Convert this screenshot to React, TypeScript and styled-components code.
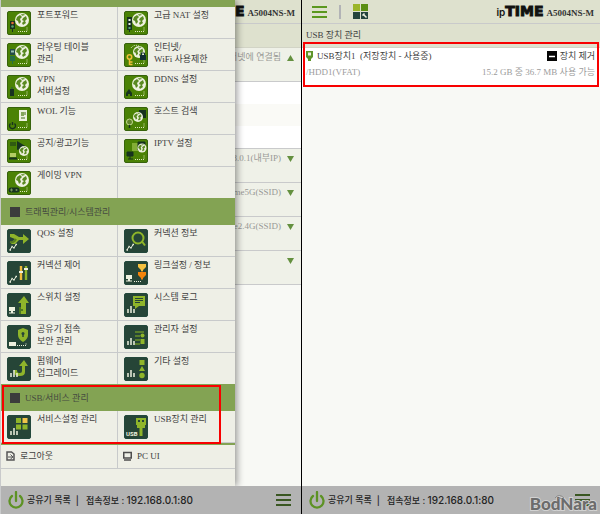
import React from "react";
import styled, { createGlobalStyle } from "styled-components";

const GlobalStyle = createGlobalStyle`
  * { box-sizing: border-box; }
  body {
    margin: 0;
    background: #f8f9f5;
    color: #404040;
    font-family: "Liberation Serif", "Noto Sans CJK KR", serif;
    font-size: 9px;
    line-height: 12px;
  }
  a { color: inherit; text-decoration: none; }
  button { font: inherit; color: inherit; background: none; border: 0; padding: 0; cursor: pointer; }
  svg { display: block; flex: none; }
  h1, h2, p { margin: 0; font: inherit; }
`;

const Screens = styled.div`
  display: grid;
  grid-template-columns: 301fr 299fr;
  min-height: 100vh;
`;

const Phone = styled.section<{ $edge: string }>`
  display: flex;
  flex-direction: column;
  min-width: 0;
  border-left: 1px solid ${(p) => p.$edge};
`;

const Body = styled.main`
  position: relative;
  flex: 1;
`;

const Header = styled.header`
  display: flex;
  align-items: center;
  height: 24px;
  padding: 0 6px 0 10px;
  background: #dee1ce;
  border-bottom: 1px solid #c9cacb;
`;

const HeaderTools = styled.div`
  display: flex;
  align-items: center;
  gap: 12px;
`;

const ToolDivider = styled.span`
  width: 2px;
  height: 14px;
  background: #b2b3b6;
`;

const Brand = styled.div`
  display: flex;
  align-items: baseline;
  margin-left: auto;
  color: #111;
`;

const BrandIp = styled.span`
  font: 600 10px/14px Inter, sans-serif;
`;

const BrandTime = styled.span`
  font: 700 14px/14px "DejaVu Sans", sans-serif;
  -webkit-text-stroke: 1px #111;
`;

const Model = styled.span`
  margin-left: 3px;
  color: #343434;
  font-weight: 700;
`;

const TitleBar = styled.h1`
  height: 24px;
  padding: 5px 4px;
  background: #dee1ce;
  border-bottom: 1px solid #d2d4c6;
`;

const StatusRow = styled.button`
  display: flex;
  justify-content: flex-end;
  align-items: flex-start;
  gap: 6px;
  width: 100%;
  height: 34px;
  padding: 3px 7px;
  border-bottom: 1px solid #c9cacb;
  background: #eff1e8;
  color: #999996;
`;

const Stripe = styled.div<{ $tone: string }>`
  height: 22px;
  background: ${(p) => p.$tone};
`;

const StripeGroup = styled.div`
  border-bottom: 1px solid #c9cacb;
`;

const Arrow = styled.svg`
  margin-top: 4px;
`;

const Drawer = styled.nav`
  position: absolute;
  inset: 0 auto 0 0;
  width: 78%;
  background: #eeefe6;
  border-top: 7px solid #83a353;
  box-shadow: 2px 0 7px rgba(0, 0, 0, 0.4);
  clip-path: inset(0 -12px 0 0);
`;

const MenuGroup = styled.div`
  position: relative;
`;

const SectionTitle = styled.h2`
  position: relative;
  display: flex;
  align-items: center;
  gap: 5px;
  height: 27px;
  margin-top: -1px;
  padding: 0 9px;
  background: #83a353;
  color: #464b40;

  &::before {
    content: "";
    width: 10px;
    height: 10px;
    background: #3c3c3c;
  }
`;

const MenuGrid = styled.div`
  display: grid;
  grid-template-columns: 1fr 1fr;
`;

const MenuLink = styled.a`
  display: flex;
  align-items: flex-start;
  gap: 6px;
  min-height: 32px;
  padding: 4px 0 0 6px;
  border-bottom: 1px solid #c8cacb;
  white-space: pre-line;

  &:nth-child(odd) { border-right: 1px solid #c8cacb; }
`;

const MenuLabel = styled.span`
  margin-top: -2px;
`;

const ShortLinks = styled(MenuGrid)`
  border-top: 2px solid #83a353;
`;

const ShortLink = styled.a`
  display: flex;
  align-items: center;
  gap: 5px;
  height: 24px;
  padding: 0 5px 2px;
  border-bottom: 1px solid #c8cacb;

  &:first-child { border-right: 1px solid #c8cacb; }
`;

const MenuMark = styled.div`
  position: absolute;
  inset: 1px 14px -1px 1px;
  border: 2px solid #f80000;
  pointer-events: none;
`;

const Device = styled.article`
  position: relative;
  padding: 0 5px 0 4px;
  height: 39px;
  background: #fff;
`;

const DeviceMark = styled.div`
  position: absolute;
  inset: -6px 1px 0 1px;
  border: 2px solid #f80000;
  pointer-events: none;
`;

const DeviceLine = styled.div<{ $muted?: boolean }>`
  display: flex;
  justify-content: space-between;
  align-items: center;
  height: 16px;
  color: ${(p) => (p.$muted ? "#9c9c9c" : "#404040")};
`;

const DeviceName = styled.p`
  display: flex;
  align-items: center;
  gap: 4px;
  white-space: pre;
`;

const RemoveButton = styled.button`
  display: flex;
  align-items: center;
  gap: 3px;
`;

const Footer = styled.footer`
  position: relative;
  display: flex;
  align-items: center;
  height: 28px;
  padding: 0 10px 0 7px;
  background: #b3b3b3;
  color: #242424;
  font-family: Inter, "Noto Sans CJK KR", sans-serif;
  font-weight: 500;
`;

const FooterButton = styled.button`
  display: flex;
  align-items: center;
  gap: 3px;
`;

const FooterInfo = styled.p`
  display: flex;
  align-items: baseline;
  gap: 7px;
  margin-left: 5px;
`;

const Address = styled.span`
  font-size: 10px;
`;

const FooterMenu = styled.button`
  margin-left: auto;
`;

const Watermark = styled.div`
  position: absolute;
  right: 3px;
  bottom: 1px;
  color: #6c6c6c;
  font: 900 17px/18px Lato, sans-serif;
  -webkit-text-stroke: 2px #d2d2d2;
  paint-order: stroke fill;
`;

const WatermarkWave = styled.svg`
  position: absolute;
  left: 24px;
  top: -1px;
`;

const LIME = "#8fb52a";
const CREAM = "#eef1df";
const INK = "#17321f";

function Globe({ x = 15, y = 9, r = 7 }: { x?: number; y?: number; r?: number }) {
  return (
    <g transform={`translate(${x} ${y}) scale(${r / 7})`}>
      <circle r="7" fill={CREAM} />
      <path d="M-5-3 -2-5 0-3-2-1-1 2-3 4-4 1-6 0Z" fill="#5a8a22" />
      <path d="M1-2 4-4 5-1 3 1 4 3 1 5 0 3 2 1 0 0Z" fill="#5a8a22" />
      <path d="M-1-6 2-6 3-5 0-4Z" fill="#7aa34c" />
    </g>
  );
}

function Bars() {
  return <path d="M4 20v-4M7 20v-7M10 20v-4" stroke={CREAM} strokeWidth="1.5" />;
}

function Trend() {
  return (
    <g fill="none" stroke={CREAM}>
      <path d="M3 21 5 17.500 7 19 9 15.500" />
      <path d="M2.500 21h1.500M4.500 17.500h1M6.500 19h1M8.500 15.500h1.500" strokeWidth="1.500" />
    </g>
  );
}

function Host() {
  return <path d="M2 14h6v4H6v1.500h2v1H2v-1h2V18H2Z" fill={CREAM} />;
}

const Lights = ({ top }: { top: string }) => (
  <g>
    <path d="M3 10h5v8H6v3H5v-3H3Z" fill={INK} />
    <circle cx="5.5" cy="12" r="1.300" fill={top} />
    <circle cx="5.5" cy="15.500" r="1.300" fill="#56a36e" />
  </g>
);

const netArt: Record<string, React.ReactNode> = {
  forward: <><Globe /><Lights top="#e76b35" /></>,
  nat: <><Globe /><path d="M3 6h5v13H6v2H5v-2H3Z" fill={INK} /><path d="M4.500 8h2v2h-2zM4.500 12h2v2h-2z" fill="#e8efe6" /><path d="M4.500 16h2v2h-2z" fill="#57a378" /></>,
  route: <><Globe /><path d="M3 6h5v6H3z" fill="#244d46" /><path d="M4 7.500h3v2H4z" fill="#9bc0b2" /><path d="M3 13h5v5H6v3H5v-3H3Z" fill="#276e45" /></>,
  limit: <><Globe r={6} /><path d="M7 5q3-4 8-2" fill="none" stroke={CREAM} strokeDasharray="1 1" /><path d="M16 12h6v5h-6z" fill="#122d32" /><path d="M17.500 12v-2h3v2" fill="none" stroke="#122d32" /><circle cx="5.500" cy="14" r="2.200" fill="none" stroke="#efbf38" strokeWidth="1.600" /><path d="M5.500 16v6M5.500 19h3M5.500 21.500h3" stroke="#efbf38" strokeWidth="1.500" /></>,
  vpn: <><Globe /><path d="M3 14h4v7H3z" fill={INK} /><path d="M4 12h2v2H4z" fill="#386c27" /></>,
  ddns: <><Globe /><path d="M2 18 5 14 8 18V21H6V19H4V21H2Z" fill={INK} /></>,
  wol: <><path d="M12 3h8v11h-8z" fill={CREAM} /><path d="M14 5h3v4h-3z" fill="#86a65b" /><path d="M14 11h4M18 5v3" stroke="#456c1b" /><path d="M3.500 16.500a3 3 0 1 0 4 0M5.500 15v3" fill="none" stroke={INK} strokeWidth="1.400" /></>,
  search: <><path d="M15 3h7v8h-7z" fill={INK} /><Globe x={14} y={10} r={5} /><circle cx="5.500" cy="15" r="3" fill="#61852b" stroke="#c5d992" /><path d="M5.500 18v3" stroke={INK} strokeWidth="1.500" /></>,
  notice: <><path d="M10 2 20 8 10 11Z" fill={INK} /><path d="M3 4h6M3 6h6" stroke={INK} /><Globe x={17} y={12} r={5} /><path d="M3 14h6v4H3z" fill="#b3ce64" /><path d="M2 19.500h8" stroke={INK} strokeWidth="2" /></>,
  iptv: <><path d="M8 4h6v8H8z" fill="#83ae36" /><path d="M14 3h7v8h-7zM3 13h6v4H3zM4 20h5M6 17v3" fill={INK} stroke={INK} /><Globe x={18} y={9} r={4.5} /></>,
  gaming: <><Globe /><rect x="1.500" y="16.500" width="11" height="5" rx="2.500" fill={INK} /><path d="M3 19h3M4.500 17.500v3" stroke="#739657" /><circle cx="9.500" cy="19" r="1" fill="#739657" /></>,
};

const Node = ({ x, y, fill }: { x: number; y: number; fill: string }) => (
  <path transform={`translate(${x} ${y})`} d="M-4-3h8v3L1 3v1h-2V3l-3-3Z" fill={fill} />
);

const sysArt: Record<string, React.ReactNode> = {
  qos: <><path d="M3 5h4l5 3h4V5l6 5-6 5v-4h-4l-4 4H4l1-2 3-3-5-2Z" fill={LIME} /><path d="M3 13q4 1 6-3" stroke="#587f21" strokeWidth="2" fill="none" /><Trend /></>,
  info: <><circle cx="14" cy="9" r="5.500" fill="none" stroke={LIME} strokeWidth="2" /><path d="m18 12.500 3 4" stroke={LIME} strokeWidth="2" /><Trend /></>,
  control: <><path d="M14 5v14" stroke="#f1ba3c" strokeWidth="2.400" /><path d="M19 5v14" stroke={LIME} strokeWidth="2.400" /><path d="M12 11h4M17 8h4" stroke={CREAM} strokeWidth="2" /><Trend /></>,
  link: <><path d="M18 5v14" stroke="#d5862c" /><Node x={18} y={6} fill="#f5c241" /><Node x={18} y={14} fill="#f4840b" /><Host /><path d="M10 20.500h8" stroke={CREAM} strokeDasharray="1 1" /></>,
  switch: <><path d="M17 3 22 10h-3v11h-5V10h-3Z" fill={LIME} /><path d="M12 14h2v7h-2zM14 16h2v2h-2z" fill="#4d7723" /><Host /></>,
  log: <><path d="M9 3h12v10h-6l-4 3v-3H9Z" fill={LIME} /><path d="M11 5.500h8M11 7.500h8M11 9.500h5" stroke="#264537" /><Bars /></>,
  secure: <><path d="M16 3 21 5v5q0 4-5 7-5-3-5-7V5Z" fill={LIME} /><circle cx="16" cy="8.500" r="1.500" fill="#264537" /><path d="M16 9v3" stroke="#264537" strokeWidth="1.500" /><path d="M2 17h7v4H2z" fill={CREAM} /><path d="M10 20.500h9v-3" fill="none" stroke={CREAM} strokeDasharray="1 1" /></>,
  admin: <><path d="M11 7h9M11 11h5M11 15h5M11 19h5" stroke="#699029" strokeWidth="1.500" /><circle cx="18.500" cy="10.500" r="2" fill={LIME} /><path d="M16.500 14h4v5h-4z" fill={LIME} /><Bars /></>,
  firmware: <><path d="M7 13h3q0 3 2 3h1q2 0 2-2V9h-3l5-6 4 6h-3v6q0 4-5 4h-2q-4 0-4-6Z" fill={LIME} /><Bars /></>,
  etc: <><path d="M15.500 3h5v5h-5zM18 9l3 5h-6z" fill={LIME} /><circle cx="18" cy="18.500" r="2.700" fill={LIME} /><Bars /></>,
  service: <><path d="M9 3h5v5H9zM9 9.500h5v5H9zM15.500 9.500h5v5h-5z" fill={LIME} /><path d="M15.500 3h5v5h-5z" fill="#f2c54a" /><Bars /></>,
  usb: <><path d="M12 3h10v7h-1v3h-2.500v8h-3v-8H13v-3h-1Z" fill={LIME} /><path d="M14 5h2v2h-2zM18 5h2v2h-2z" fill="#264537" /><text x="2" y="21" fill={CREAM} fontFamily="Roboto, sans-serif" fontWeight="700" fontSize="6">USB</text></>,
};

function MenuIcon({ name }: { name: string }) {
  const net = name in netArt;
  return (
    <svg width="24" height="24" viewBox="0 0 24 24" aria-hidden="true">
      <rect x=".5" y=".5" width="23" height="23" rx="1.500" fill={net ? "#4b8205" : "#264537"} stroke={net ? "#37630c" : "#23483c"} />
      {net && <path d="M11 20.500h9v-4" fill="none" stroke="#dce5bd" strokeDasharray="1 1" />}
      {net ? netArt[name] : sysArt[name]}
    </svg>
  );
}

function BurgerIcon({ color }: { color: string }) {
  return (
    <svg width="15" height="14" viewBox="0 0 15 14" aria-hidden="true">
      <path d="M0 2h15M0 7h15M0 12h15" stroke={color} strokeWidth="2" />
    </svg>
  );
}

function PowerIcon() {
  return (
    <svg width="16" height="18" viewBox="0 0 16 18" aria-hidden="true">
      <path d="M4 5a6.500 6.500 0 1 0 8 0M8 1v9" fill="none" stroke="#5d9224" strokeWidth="2.300" strokeLinecap="round" />
    </svg>
  );
}

type Item = [icon: string, label: string];

const networkItems: Item[] = [
  ["forward", "포트포워드"],
  ["nat", "고급 NAT 설정"],
  ["route", "라우팅 테이블\n관리"],
  ["limit", "인터넷/\nWiFi 사용제한"],
  ["vpn", "VPN\n서버설정"],
  ["ddns", "DDNS 설정"],
  ["wol", "WOL 기능"],
  ["search", "호스트 검색"],
  ["notice", "공지/광고기능"],
  ["iptv", "IPTV 설정"],
  ["gaming", "게이밍 VPN"],
];

const systemItems: Item[] = [
  ["qos", "QOS 설정"],
  ["info", "커넥션 정보"],
  ["control", "커넥션 제어"],
  ["link", "링크설정 / 정보"],
  ["switch", "스위치 설정"],
  ["log", "시스템 로그"],
  ["secure", "공유기 접속\n보안 관리"],
  ["admin", "관리자 설정"],
  ["firmware", "펌웨어\n업그레이드"],
  ["etc", "기타 설정"],
];

const usbItems: Item[] = [
  ["service", "서비스설정 관리"],
  ["usb", "USB장치 관리"],
];

function Menu({ items }: { items: Item[] }) {
  return (
    <MenuGrid>
      {items.map(([icon, label]) => (
        <MenuLink key={icon} href={`#${icon}`}>
          <MenuIcon name={icon} />
          <MenuLabel>{label}</MenuLabel>
        </MenuLink>
      ))}
    </MenuGrid>
  );
}

function BrandMark() {
  return (
    <Brand>
      <BrandIp>ip</BrandIp>
      <BrandTime>TIME</BrandTime>
      <Model>A5004NS-M</Model>
    </Brand>
  );
}

function Status({ label, open }: { label?: string; open?: boolean }) {
  return (
    <StatusRow aria-expanded={!!open} aria-label={label || "상세"}>
      {label}
      <Arrow width="7" height="6" viewBox="0 0 7 6">
        <path d={open ? "M0 6 3.500 0 7 6Z" : "M0 0h7L3.500 6Z"} fill="#64903f" />
      </Arrow>
    </StatusRow>
  );
}

function BottomBar({ children }: { children?: React.ReactNode }) {
  return (
    <Footer>
      <FooterButton>
        <PowerIcon />
        공유기 목록
      </FooterButton>
      <FooterInfo>
        <span>|</span>
        <span>접속정보 : <Address>192.168.0.1:80</Address></span>
      </FooterInfo>
      <FooterMenu aria-label="메뉴">
        <BurgerIcon color="#3a5722" />
      </FooterMenu>
      {children}
    </Footer>
  );
}

export default function App() {
  return (
    <>
      <GlobalStyle />
      <Screens>
        <Phone $edge="#c9cacb">
          <Body>
            <Header><BrandMark /></Header>
            <TitleBar />
            <Status label="인터넷에 연결됨" open />
            <StripeGroup>
              <Stripe $tone="#ffffff" />
              <Stripe $tone="#fafaf6" />
              <Stripe $tone="#ffffff" />
            </StripeGroup>
            <Status label="192.168.0.1(내부IP)" />
            <Status label="iptime5G(SSID)" />
            <Status label="iptime2.4G(SSID)" />
            <Status />
            <Drawer>
              <Menu items={networkItems} />
              <MenuGroup>
                <SectionTitle>트래픽관리/시스템관리</SectionTitle>
                <Menu items={systemItems} />
              </MenuGroup>
              <MenuGroup>
                <SectionTitle>USB/서비스 관리</SectionTitle>
                <Menu items={usbItems} />
                <MenuMark />
              </MenuGroup>
              <ShortLinks>
                <ShortLink href="#logout">
                  <svg width="9" height="10" viewBox="0 0 9 10" aria-hidden="true">
                    <path d="M1 1h4.500l2.500 2v6H1Z" fill="none" stroke="#555" strokeWidth="1.500" />
                    <path d="M2 6h4M4.500 3.500 7 6 4.500 8" fill="none" stroke="#555" />
                  </svg>
                  로그아웃
                </ShortLink>
                <ShortLink href="#pc">
                  <svg width="9" height="10" viewBox="0 0 9 10" aria-hidden="true">
                    <path d="M.75 1.500h7.500v5.500H.75ZM1 9h7" fill="none" stroke="#4d4d4d" strokeWidth="1.500" />
                  </svg>
                  PC UI
                </ShortLink>
              </ShortLinks>
            </Drawer>
          </Body>
          <BottomBar />
        </Phone>
        <Phone $edge="#000">
          <Body>
            <Header>
              <HeaderTools>
                <button aria-label="메뉴"><BurgerIcon color="#5b981f" /></button>
                <ToolDivider />
                <button aria-label="바로가기">
                  <svg width="15" height="15" viewBox="0 0 15 15" aria-hidden="true">
                    <path d="M0 0h7v7H0z" fill="#9ab52a" />
                    <path d="M8 0h7v7H8z" fill="#5b8f14" />
                    <path d="M0 8h7v7H0zM8 8h7v7H8z" fill="#24443d" />
                    <path d="m10 10 3.500 3.500M9.500 11.500l2-2" stroke="#eef1df" strokeWidth="1.500" />
                  </svg>
                </button>
              </HeaderTools>
              <BrandMark />
            </Header>
            <TitleBar>USB 장치 관리</TitleBar>
            <Device>
              <DeviceLine>
                <DeviceName>
                  <svg width="7" height="10" viewBox="0 0 7 10" aria-hidden="true">
                    <path d="M0 0h7v6L5 8v2H2V8L0 6Z" fill="#5f952a" />
                    <path d="M2 1.500h3v3H2z" fill="#edf1df" />
                  </svg>
                  {"USB장치1  (저장장치 - 사용중)"}
                </DeviceName>
                <RemoveButton>
                  <svg width="10" height="10" viewBox="0 0 10 10" aria-hidden="true">
                    <path d="M0 0h10v10H0z" fill="#050505" />
                    <path d="M2 5.500h6" stroke="#fff" strokeWidth="1.500" />
                  </svg>
                  장치 제거
                </RemoveButton>
              </DeviceLine>
              <DeviceLine $muted>
                <span>/HDD1(VFAT)</span>
                <span>15.2 GB 중 36.7 MB 사용 가능</span>
              </DeviceLine>
              <DeviceMark />
            </Device>
          </Body>
          <BottomBar>
            <Watermark>
              BodNara
              <WatermarkWave width="12" height="6" viewBox="0 0 12 6" aria-hidden="true">
                <path d="M1 4q4-5 9 0M4 5q2-2 4 0" fill="none" stroke="#8a8a8a" />
              </WatermarkWave>
            </Watermark>
          </BottomBar>
        </Phone>
      </Screens>
    </>
  );
}
